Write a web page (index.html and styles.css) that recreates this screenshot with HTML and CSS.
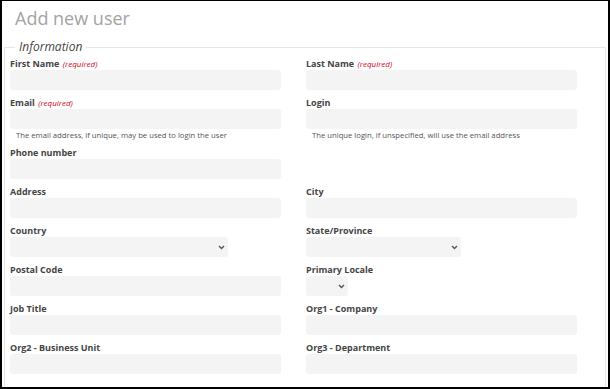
FILE: index.html
```html
<!DOCTYPE html>
<html lang="en">
<head>
  <meta charset="UTF-8">
  <meta name="viewport" content="width=device-width, initial-scale=1.0">
  <title>Add new user</title>
  <link rel="stylesheet" href="styles.css">
</head>
<body>
  <div class="page">
    <h2 class="title">Add new user</h2>
    <fieldset class="info">
      <legend>Information</legend>
      <div class="fields">
        <div class="field">
          <label>First Name <em class="req">(required)</em></label>
          <input class="text" type="text">
        </div>
        <div class="field">
          <label>Last Name <em class="req">(required)</em></label>
          <input class="text" type="text">
        </div>

        <div class="field">
          <label>Email <em class="req">(required)</em></label>
          <input class="text" type="text">
          <div class="help">The email address, if unique, may be used to login the user</div>
        </div>
        <div class="field">
          <label>Login</label>
          <input class="text" type="text">
          <div class="help">The unique login, if unspecified, will use the email address</div>
        </div>

        <div class="field">
          <label>Phone number</label>
          <input class="text" type="text">
        </div>
        <div class="field"></div>

        <div class="field">
          <label>Address</label>
          <input class="text" type="text">
        </div>
        <div class="field">
          <label>City</label>
          <input class="text" type="text">
        </div>

        <div class="field">
          <label>Country</label>
          <div class="select-wrap country">
            <select class="select"><option></option></select>
            <svg class="chevron" width="7" height="5" viewBox="0 0 7 5"><path d="M1 1 L3.5 3.5 L6 1" fill="none" stroke="#555" stroke-width="1.4"/></svg>
          </div>
        </div>
        <div class="field">
          <label>State/Province</label>
          <div class="select-wrap state">
            <select class="select"><option></option></select>
            <svg class="chevron" width="7" height="5" viewBox="0 0 7 5"><path d="M1 1 L3.5 3.5 L6 1" fill="none" stroke="#555" stroke-width="1.4"/></svg>
          </div>
        </div>

        <div class="field">
          <label>Postal Code</label>
          <input class="text" type="text">
        </div>
        <div class="field">
          <label>Primary Locale</label>
          <div class="select-wrap locale">
            <select class="select"><option></option></select>
            <svg class="chevron" width="7" height="5" viewBox="0 0 7 5"><path d="M1 1 L3.5 3.5 L6 1" fill="none" stroke="#555" stroke-width="1.4"/></svg>
          </div>
        </div>

        <div class="field">
          <label>Job Title</label>
          <input class="text" type="text">
        </div>
        <div class="field">
          <label>Org1 - Company</label>
          <input class="text" type="text">
        </div>

        <div class="field">
          <label>Org2 - Business Unit</label>
          <input class="text" type="text">
        </div>
        <div class="field">
          <label>Org3 - Department</label>
          <input class="text" type="text">
        </div>
      </div>
    </fieldset>
  </div>
</body>
</html>
```

FILE: styles.css
```css
html, body {
  margin: 0;
  padding: 0;
}

body {
  font-family: "Open Sans", "Liberation Sans", sans-serif;
  background-color: #fff;
}

.page {
  box-sizing: border-box;
  width: 610px;
  height: 389px;
  border: 2px solid #000;
  border-top-width: 1px;
  overflow: hidden;
  padding-top: 5px;
}

.title {
  margin: 0 0 0 13px;
  font-size: 18px;
  line-height: 24px;
  font-weight: normal;
  color: #a3a3a3;
}

.info {
  margin: 9px 0 0 2px;
  width: 602px;
  box-sizing: border-box;
  border: 1px solid #e6e6e6;
  padding: 2px 5px 30px 5px;
}

.info legend {
  margin-left: 5px;
  padding: 0 4px;
  font-size: 12px;
  line-height: 16px;
  font-style: italic;
  color: #444;
}

.fields {
  display: grid;
  grid-template-columns: 296px 1fr;
}

.field {
  padding-bottom: 6px;
}

.field label {
  display: block;
  height: 13px;
  font-size: 9px;
  line-height: 13px;
  font-weight: bold;
  color: #444;
}

.req {
  font-size: 8px;
  line-height: 1;
  font-weight: normal;
  color: #d0021b;
  margin-left: 1px;
}

.text {
  display: block;
  box-sizing: border-box;
  width: 271px;
  height: 20px;
  margin: 0;
  border: none;
  border-radius: 3px;
  background-color: #f4f4f4;
}

.help {
  margin-top: 2px;
  padding-left: 6px;
  font-size: 7.7px;
  line-height: 9px;
  color: #555;
}

.select-wrap {
  position: relative;
  height: 20px;
}

.select-wrap.country {
  width: 218px;
}

.select-wrap.state {
  width: 155px;
}

.select-wrap.locale {
  width: 42px;
}

.select {
  display: block;
  appearance: none;
  -webkit-appearance: none;
  box-sizing: border-box;
  width: 100%;
  height: 20px;
  margin: 0;
  border: none;
  border-radius: 3px;
  background-color: #f4f4f4;
}

.chevron {
  position: absolute;
  right: 3px;
  top: 8px;
}
```
